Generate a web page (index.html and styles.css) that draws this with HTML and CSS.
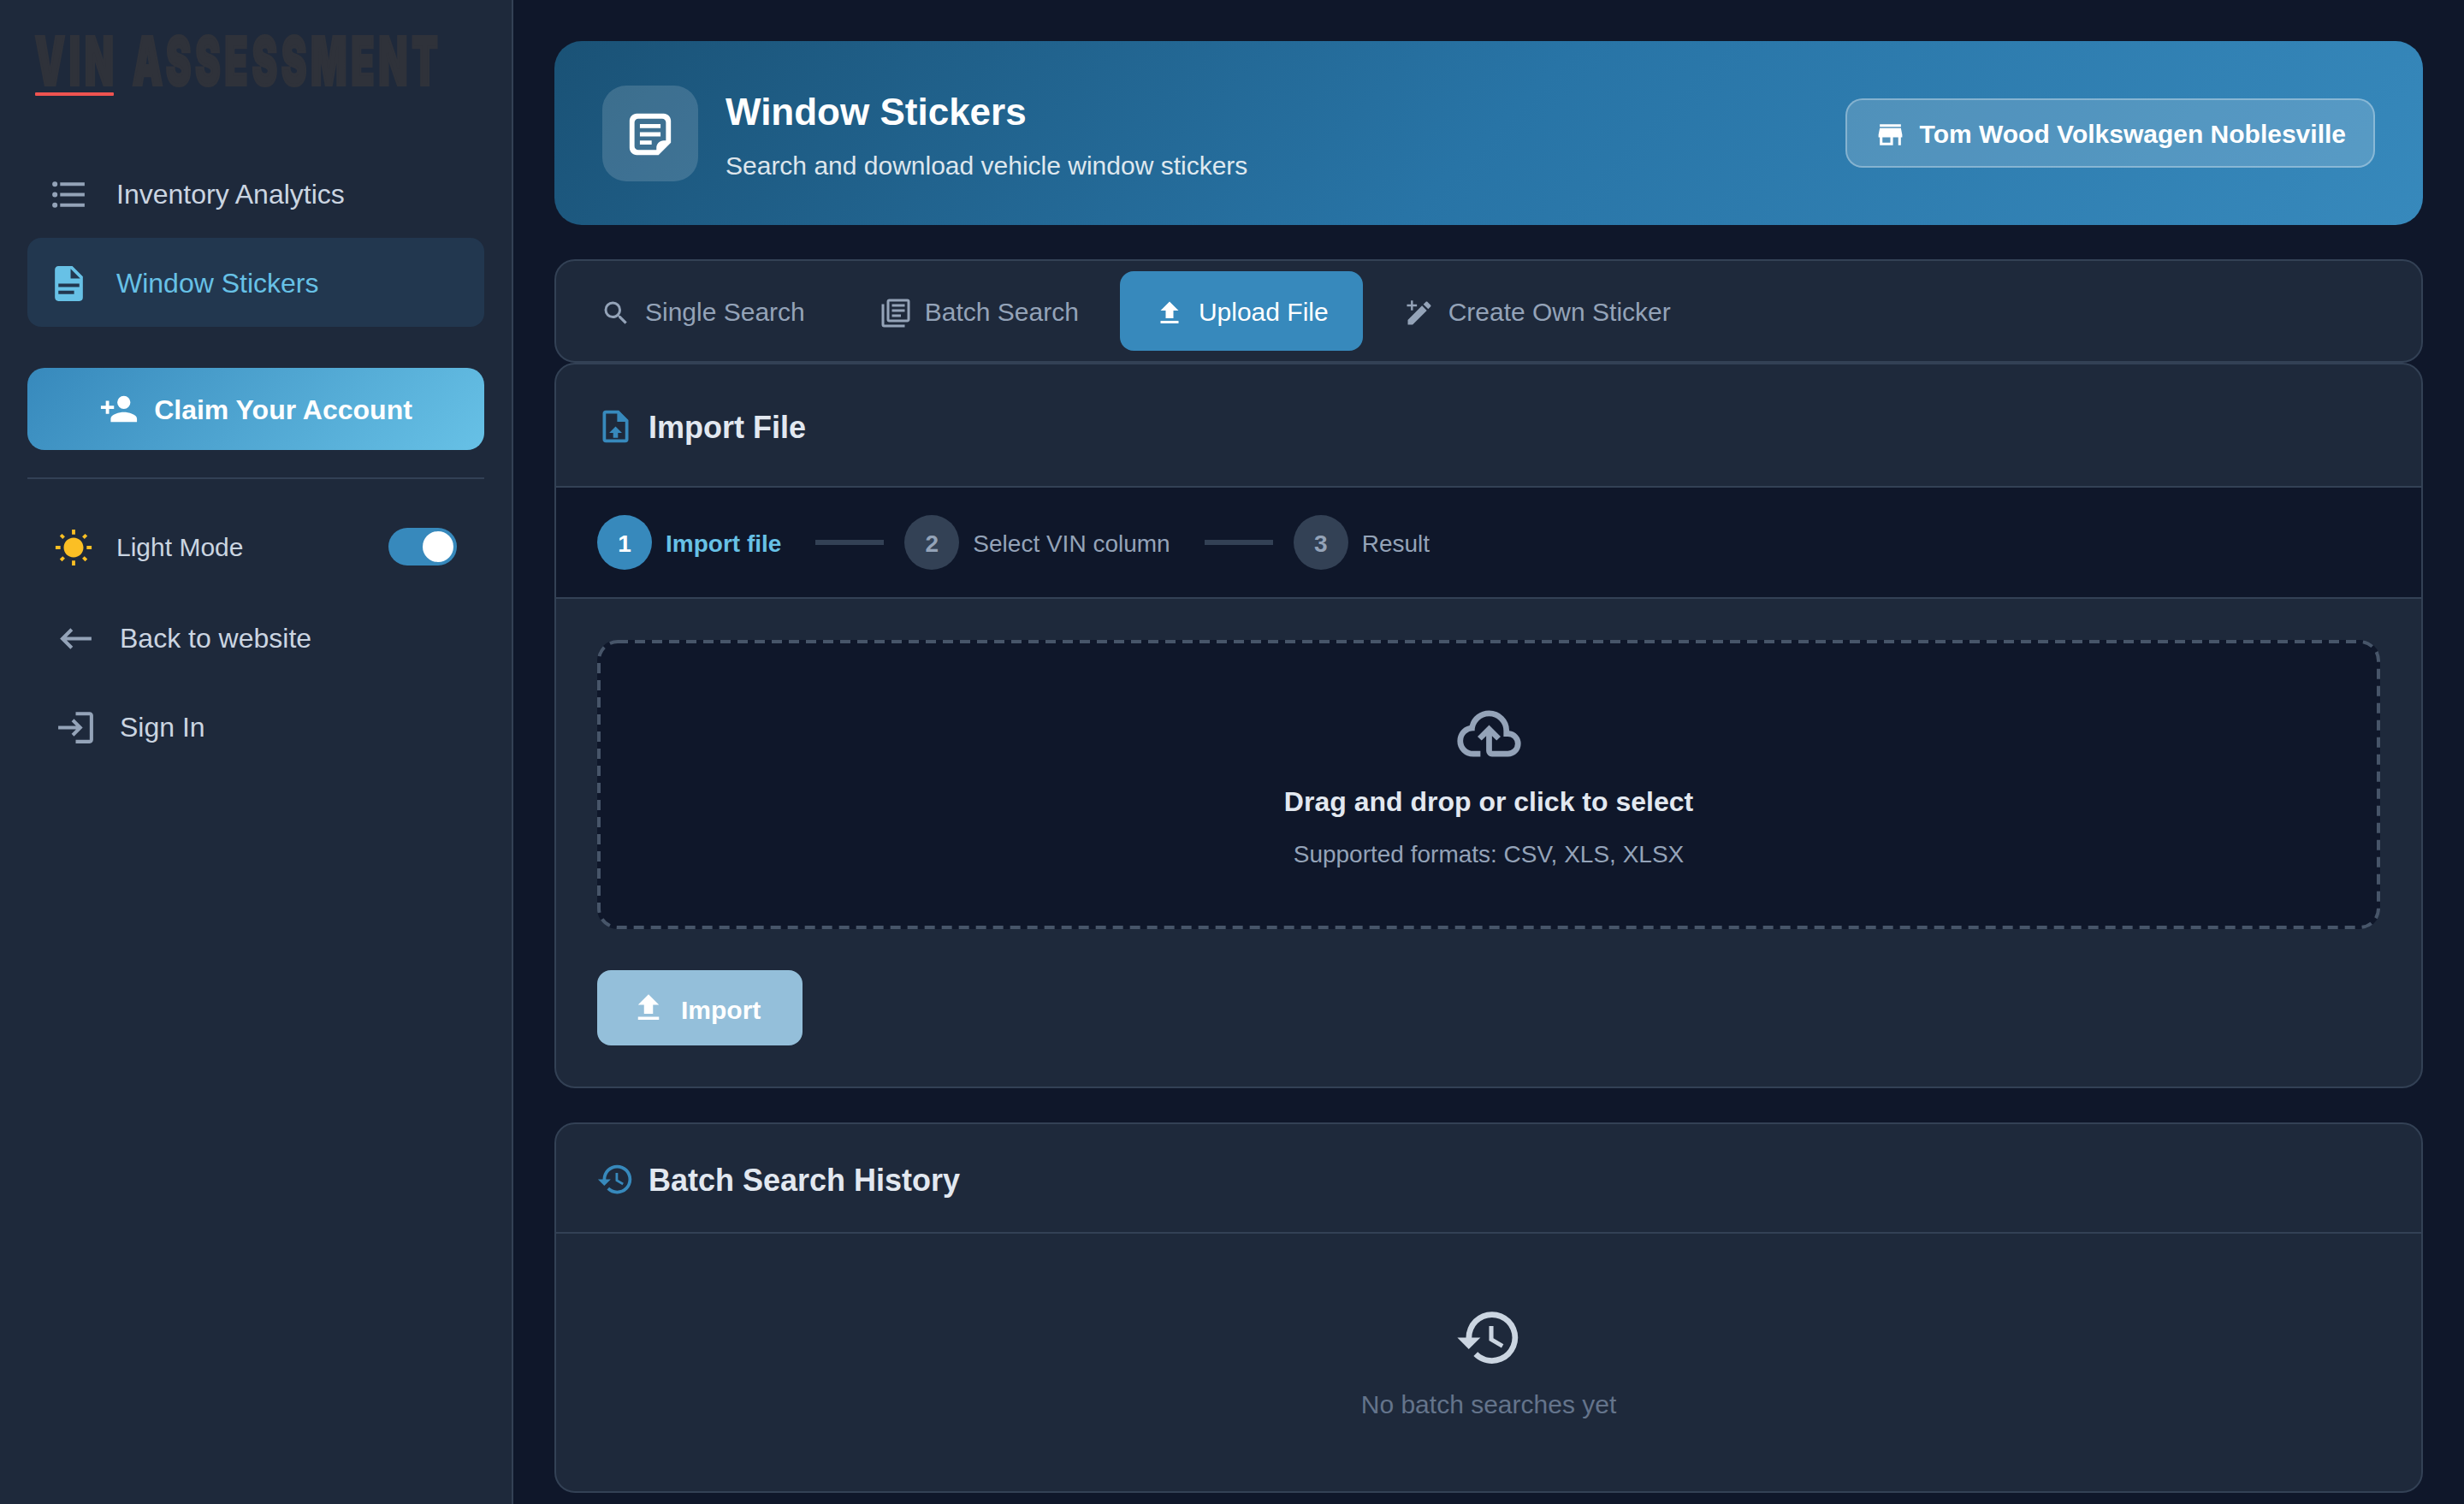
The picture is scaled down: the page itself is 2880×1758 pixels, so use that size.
FILE: index.html
```html
<!DOCTYPE html>
<html lang="en">
<head>
  <meta charset="UTF-8" />
  <meta name="viewport" content="width=device-width, initial-scale=1" />
  <title>VIN Assessment - Window Stickers</title>
  <link rel="stylesheet" href="styles.css">
</head>
<body>
  <!-- Sidebar -->
  <aside class="sidebar">
    <a class="logo" href="#">
      <span class="logo-text">VIN ASSESSMENT</span>
      <span class="logo-line"></span>
    </a>

    <nav class="nav">
      <a class="nav-item" href="#">
        <span class="nav-icon"><svg class="icon" viewBox="0 0 24 24"><path d="M7,5H21V7H7V5M7,13V11H21V13H7M4,4.5A1.5,1.5 0 0,1 5.5,6A1.5,1.5 0 0,1 4,7.5A1.5,1.5 0 0,1 2.5,6A1.5,1.5 0 0,1 4,4.5M4,10.5A1.5,1.5 0 0,1 5.5,12A1.5,1.5 0 0,1 4,13.5A1.5,1.5 0 0,1 2.5,12A1.5,1.5 0 0,1 4,10.5M7,19V17H21V19H7M4,16.5A1.5,1.5 0 0,1 5.5,18A1.5,1.5 0 0,1 4,19.5A1.5,1.5 0 0,1 2.5,18A1.5,1.5 0 0,1 4,16.5Z"/></svg></span>
        <span class="label">Inventory Analytics</span>
      </a>
      <a class="nav-item active" href="#">
        <span class="nav-icon"><svg class="icon" viewBox="0 0 24 24"><path d="M13,9H18.5L13,3.5V9M6,2H14L20,8V20A2,2 0 0,1 18,22H6C4.89,22 4,21.1 4,20V4C4,2.89 4.89,2 6,2M15,18V16H6V18H15M18,14V12H6V14H18Z"/></svg></span>
        <span class="label">Window Stickers</span>
      </a>
    </nav>

    <button class="claim-btn" type="button">
      <svg class="icon" viewBox="0 0 24 24"><path d="M15,14C12.33,14 7,15.33 7,18V20H23V18C23,15.33 17.67,14 15,14M6,10V7H4V10H1V12H4V15H6V12H9V10M15,12A4,4 0 0,0 19,8A4,4 0 0,0 15,4A4,4 0 0,0 11,8A4,4 0 0,0 15,12Z"/></svg>
      <span class="label">Claim Your Account</span>
    </button>

    <div class="sidebar-footer">
      <div class="theme-row">
        <svg class="icon sun" viewBox="0 0 24 24"><path d="M3.55 19.09L4.96 20.5L6.76 18.71L5.34 17.29M12 6C8.69 6 6 8.69 6 12S8.69 18 12 18 18 15.31 18 12C18 8.68 15.31 6 12 6M20 13H23V11H20M17.24 18.71L19.04 20.5L20.45 19.09L18.66 17.29M20.45 5L19.04 3.6L17.24 5.39L18.66 6.81M13 1H11V4H13M6.76 5.39L4.96 3.6L3.55 5L5.34 6.81L6.76 5.39M1 13H4V11H1M13 20H11V23H13"/></svg>
        <span class="label">Light Mode</span>
        <span class="toggle"><span class="knob"></span></span>
      </div>
      <a class="nav-item link" href="#">
        <span class="nav-icon"><svg class="icon" viewBox="0 0 24 24"><path d="M21,11H6.83L10.41,7.41L9,6L3,12L9,18L10.41,16.58L6.83,13H21V11Z"/></svg></span>
        Back to website
      </a>
      <a class="nav-item link" href="#">
        <span class="nav-icon"><svg class="icon" viewBox="0 0 24 24"><path d="M11 7L9.6 8.4L12.2 11H2V13H12.2L9.6 15.6L11 17L16 12L11 7M20 19H12V21H20C21.1 21 22 20.1 22 19V5C22 3.9 21.1 3 20 3H12V5H20V19Z"/></svg></span>
        Sign In
      </a>
    </div>
  </aside>

  <main class="content">
    <!-- Page header -->
    <header class="page-header">
      <div class="header-icon">
        <svg class="icon" viewBox="0 0 24 24"><path fill-rule="evenodd" d="M5.5,2C3.56,2 2,3.56 2,5.5V18.5C2,20.44 3.56,22 5.5,22H16L22,16V5.5C22,3.56 20.44,2 18.5,2H5.5M6.25,4.4H17.75A1.85,1.85 0 0,1 19.6,6.25V15H18.5C16.56,15 15,16.56 15,18.5V19.6H6.25A1.85,1.85 0 0,1 4.4,17.75V6.25A1.85,1.85 0 0,1 6.25,4.4Z"/><path d="M7,7H17V9H7V7M7,11H17V13H7V11M7,15H12.7V17H7V15Z"/></svg>
      </div>
      <div class="header-text">
        <h1>Window Stickers</h1>
        <p>Search and download vehicle window stickers</p>
      </div>
      <div class="dealer">
        <svg class="icon" viewBox="0 0 24 24"><path d="M12,18H6V14H12M21,14V12L20,7H4L3,12V14H4V20H14V14H18V20H20V14M20,4H4V6H20V4Z"/></svg>
        <span class="label">Tom Wood Volkswagen Noblesville</span>
      </div>
    </header>

    <!-- Tabs -->
    <div class="tabs">
      <button class="tab" type="button">
        <svg class="icon" viewBox="0 0 24 24"><path d="M9.5,3A6.5,6.5 0 0,1 16,9.5C16,11.11 15.41,12.59 14.44,13.73L14.71,14H15.5L20.5,19L19,20.5L14,15.5V14.71L13.73,14.44C12.59,15.41 11.11,16 9.5,16A6.5,6.5 0 0,1 3,9.5A6.5,6.5 0 0,1 9.5,3M9.5,5C7,5 5,7 5,9.5C5,12 7,14 9.5,14C12,14 14,12 14,9.5C14,7 12,5 9.5,5Z"/></svg>
        <span class="label">Single Search</span>
      </button>
      <button class="tab" type="button">
        <svg class="icon" viewBox="0 0 24 24"><path d="M16,15H9V13H16V15M19,11H9V9H19V11M19,7H9V5H19V7M3,5V21H19V23H3A2,2 0 0,1 1,21V5H3M21,1A2,2 0 0,1 23,3V17C23,18.11 22.11,19 21,19H7A2,2 0 0,1 5,17V3C5,1.89 5.89,1 7,1H21M7,3V17H21V3H7Z"/></svg>
        <span class="label">Batch Search</span>
      </button>
      <button class="tab active" type="button">
        <svg class="icon" viewBox="0 0 24 24"><path d="M9,16V10H5L12,3L19,10H15V16H9M5,20V18H19V20H5Z"/></svg>
        <span class="label">Upload File</span>
      </button>
      <button class="tab" type="button">
        <svg class="icon" viewBox="0 0 24 24"><path d="M3,17.25V21H6.75L17.81,9.94L14.06,6.19L3,17.25M20.71,7.04C21.1,6.65 21.1,6 20.71,5.63L18.37,3.29C18,2.9 17.35,2.9 16.96,3.29L15.12,5.12L18.87,8.87L20.71,7.04M5.4,2.1H7V5.2H10.1V6.8H7V9.9H5.4V6.8H2.3V5.2H5.4V2.1Z"/></svg>
        <span class="label">Create Own Sticker</span>
      </button>
    </div>

    <!-- Import card -->
    <section class="card">
      <div class="card-header import-header">
        <svg class="icon" viewBox="0 0 24 24"><path d="M14,2H6A2,2 0 0,0 4,4V20A2,2 0 0,0 6,22H18A2,2 0 0,0 20,20V8L14,2M18,20H6V4H13V9H18V20M12,12L16,16H13.5V19H10.5V16H8L12,12Z"/></svg>
        <h2>Import File</h2>
      </div>

      <div class="steps">
        <div class="step active"><span class="num">1</span><span class="label">Import file</span></div>
        <span class="step-line"></span>
        <div class="step"><span class="num">2</span><span class="label">Select VIN column</span></div>
        <span class="step-line"></span>
        <div class="step"><span class="num">3</span><span class="label">Result</span></div>
      </div>

      <div class="card-body">
        <div class="dropzone">
          <svg class="drop-border"><rect x="2" y="2" rx="22" /></svg>
          <svg class="icon" viewBox="0 0 24 24"><path d="M6.5 20Q4.22 20 2.61 18.43 1 16.85 1 14.58 1 12.63 2.17 11.1 3.35 9.57 5.25 9.15 5.88 6.85 7.75 5.43 9.63 4 12 4 14.93 4 16.96 6.04 19 8.07 19 11 20.73 11.2 21.86 12.5 23 13.78 23 15.5 23 17.38 21.69 18.69 20.38 20 18.5 20H13Q12.18 20 11.59 19.41 11 18.83 11 18V12.85L9.4 14.4L8 13L12 9L16 13L14.6 14.4L13 12.85V18H18.5Q19.55 18 20.27 17.27 21 16.55 21 15.5 21 14.45 20.27 13.73 19.55 13 18.5 13H17V11Q17 8.93 15.54 7.46 14.08 6 12 6 9.93 6 8.46 7.46 7 8.93 7 11H6.5Q5.05 11 4.03 12.03 3 13.05 3 14.5 3 15.95 4.03 17 5.05 18 6.5 18H9V20Z"/></svg>
          <p class="drop-title">Drag and drop or click to select</p>
          <p class="drop-hint">Supported formats: CSV, XLS, XLSX</p>
        </div>
        <button class="import-btn" type="button">
          <svg class="icon" viewBox="0 0 24 24"><path d="M9,16V10H5L12,3L19,10H15V16H9M5,20V18H19V20H5Z"/></svg>
          <span class="label">Import</span>
        </button>
      </div>
    </section>

    <!-- History card -->
    <section class="card history">
      <div class="card-header">
        <svg class="icon" viewBox="0 0 24 24"><path d="M13.5,8H12V13L16.28,15.54L17,14.33L13.5,12.25V8M13,3A9,9 0 0,0 4,12H1L4.96,16.03L9,12H6A7,7 0 0,1 13,5A7,7 0 0,1 20,12A7,7 0 0,1 13,19C11.07,19 9.32,18.21 8.06,16.94L6.64,18.36C8.27,20 10.5,21 13,21A9,9 0 0,0 22,12A9,9 0 0,0 13,3"/></svg>
        <h2>Batch Search History</h2>
      </div>
      <div class="empty">
        <svg class="icon" viewBox="0 0 24 24"><path d="M13.5,8H12V13L16.28,15.54L17,14.33L13.5,12.25V8M13,3A9,9 0 0,0 4,12H1L4.96,16.03L9,12H6A7,7 0 0,1 13,5A7,7 0 0,1 20,12A7,7 0 0,1 13,19C11.07,19 9.32,18.21 8.06,16.94L6.64,18.36C8.27,20 10.5,21 13,21A9,9 0 0,0 22,12A9,9 0 0,0 13,3"/></svg>
        <p>No batch searches yet</p>
      </div>
    </section>
  </main>
</body>
</html>
```

FILE: styles.css
```css
* {
  box-sizing: border-box;
  margin: 0;
  padding: 0;
}

body {
  display: flex;
  height: 1758px;
  overflow: hidden;
  background: #0f172a;
  color: #e2e8f0;
  font-family: "Liberation Sans", Arial, sans-serif;
  font-size: 30px;
}

a {
  color: inherit;
  text-decoration: none;
}

button {
  border: none;
  font: inherit;
  cursor: pointer;
}

.icon {
  display: block;
  flex-shrink: 0;
  fill: currentColor;
}

.label {
  padding-top: 2px;
}

/* Sidebar */
.sidebar {
  width: 600px;
  flex-shrink: 0;
  padding: 36px 32px 0;
  background: #1e293b;
  border-right: 2px solid #334155;
}

.logo {
  display: block;
  height: 138px;
  padding-left: 9px;
}

.logo-text {
  display: block;
  width: max-content;
  height: 70px;
  color: #2f323a;
  font-family: Inter, "Liberation Sans", sans-serif;
  font-size: 77px;
  font-weight: 900;
  line-height: 70px;
  letter-spacing: 9px;
  word-spacing: 6px;
  white-space: nowrap;
  transform: scaleX(0.57);
  transform-origin: left;
  -webkit-text-stroke: 4px #2f323a;
}

.logo-line {
  display: block;
  width: 92px;
  height: 4px;
  margin-top: 2px;
  border-radius: 1px;
  background: #ef5350;
}

.nav-item {
  display: flex;
  align-items: center;
  height: 104px;
  padding: 0 24px;
  border-radius: 16px;
  color: #cbd5e1;
  font-size: 32px;
}

.nav-icon {
  display: flex;
  justify-content: center;
  width: 48px;
  margin-right: 32px;
  padding-top: 3px;
  color: #94a3b8;
}

.nav-icon .icon {
  width: 49px;
  height: 49px;
}

.nav-item.active,
.nav-item.active .nav-icon {
  color: #67c1e6;
}

.nav-item.active {
  background: #22374f;
}

.nav-item.link {
  padding-left: 32px;
}

.link .nav-icon {
  margin-right: 28px;
  padding-top: 1px;
}

.claim-btn {
  display: flex;
  align-items: center;
  justify-content: center;
  gap: 18px;
  width: 100%;
  height: 96px;
  margin: 48px 0 32px;
  border-radius: 20px;
  background: linear-gradient(135deg, #3789bc, #67c1e6);
  color: #fff;
  font-size: 32px;
  font-weight: 700;
}

.claim-btn .icon {
  width: 46px;
  height: 46px;
}

.sidebar-footer {
  padding-top: 32px;
  border-top: 2px solid #334155;
}

.theme-row {
  display: flex;
  align-items: center;
  height: 94px;
  margin-bottom: 8px;
  padding: 0 32px 0 31px;
  color: #cbd5e1;
}

.sun {
  width: 46px;
  height: 46px;
  margin-top: 2px;
  margin-right: 27px;
  color: #fbbf24;
}

.toggle {
  display: flex;
  justify-content: flex-end;
  width: 80px;
  height: 44px;
  margin-left: auto;
  padding: 4px;
  border-radius: 22px;
  background: #3789bc;
}

.knob {
  width: 36px;
  height: 36px;
  border-radius: 50%;
  background: #fff;
}

/* Main content */
.content {
  flex: 1;
  padding: 48px;
}

.page-header {
  display: flex;
  align-items: center;
  height: 215px;
  margin-bottom: 40px;
  padding: 0 56px;
  border-radius: 32px;
  background: linear-gradient(135deg, #1a5276 0%, #2874a6 50%, #3789bc 100%);
  color: #fff;
}

.header-icon {
  display: flex;
  align-items: center;
  justify-content: center;
  width: 112px;
  height: 112px;
  margin-right: 32px;
  padding-top: 2px;
  border-radius: 28px;
  background: rgba(255, 255, 255, 0.15);
}

.header-icon .icon {
  width: 58px;
  height: 58px;
}

.header-text {
  padding-top: 8px;
}

.header-text h1 {
  margin-bottom: 12px;
  font-size: 44px;
  line-height: 56px;
}

.header-text p {
  line-height: 46px;
  opacity: 0.85;
}

.dealer {
  display: flex;
  align-items: center;
  gap: 16px;
  height: 81px;
  margin-left: auto;
  padding: 0 32px;
  border: 2px solid rgba(255, 255, 255, 0.3);
  border-radius: 20px;
  background: rgba(255, 255, 255, 0.17);
  font-weight: 700;
}

.dealer .icon {
  width: 37px;
  height: 37px;
  margin-top: 4px;
}

/* Tabs */
.tabs {
  display: flex;
  gap: 8px;
  height: 121px;
  padding: 12px;
  border: 2px solid #334155;
  border-radius: 24px;
  background: #1e293b;
}

.tab {
  display: flex;
  align-items: center;
  gap: 16px;
  padding: 0 40px;
  border-radius: 16px;
  background: none;
  color: #94a3b8;
}

.tab .icon {
  width: 36px;
  height: 36px;
  margin-top: 4px;
}

.tab.active {
  background: #3789bc;
  color: #fff;
}

/* Cards */
.card {
  margin-bottom: 40px;
  overflow: hidden;
  border: 2px solid #334155;
  border-radius: 24px;
  background: #1e293b;
}

.card-header {
  display: flex;
  align-items: center;
  gap: 16px;
  height: 128px;
  padding: 2px 47px 0;
  border-bottom: 2px solid #334155;
}

.import-header {
  height: 144px;
}

.card-header .icon {
  width: 45px;
  height: 45px;
  color: #3789bc;
}

.card-header h2 {
  padding-top: 3px;
  font-size: 36px;
}

/* Steps */
.steps {
  display: flex;
  align-items: center;
  gap: 24px;
  height: 130px;
  padding: 0 48px;
  border-bottom: 2px solid #334155;
  background: #0f172a;
  color: #94a3b8;
  font-size: 28px;
}

.step {
  display: flex;
  align-items: center;
  gap: 16px;
}

.step .label {
  padding-top: 4px;
}

.num {
  display: flex;
  align-items: center;
  justify-content: center;
  width: 64px;
  height: 64px;
  padding-top: 3px;
  border-radius: 50%;
  background: #334155;
  font-weight: 700;
}

.step.active {
  color: #67c1e6;
  font-weight: 700;
}

.step.active .num {
  background: #3789bc;
  color: #fff;
}

.step-line {
  width: 80px;
  height: 6px;
  margin-left: 16px;
  background: #334155;
}

.card-body {
  padding: 48px;
}

.dropzone {
  position: relative;
  display: flex;
  flex-direction: column;
  align-items: center;
  height: 338px;
  margin-bottom: 48px;
  padding-top: 69px;
  border-radius: 24px;
  background: #0f172a;
}

/* Dashed outline, drawn as svg to control the dash length */
.drop-border {
  position: absolute;
  inset: 0;
  width: 100%;
  height: 100%;
}

.drop-border rect {
  width: calc(100% - 4px);
  height: calc(100% - 4px);
  fill: none;
  stroke: #475569;
  stroke-width: 4px;
  stroke-dasharray: 12 8;
}

.dropzone .icon {
  width: 81px;
  height: 81px;
  color: #94a3b8;
}

.drop-title {
  margin: 19px 0 22px;
  font-size: 32px;
  font-weight: 700;
  line-height: 40px;
}

.drop-hint {
  color: #94a3b8;
  font-size: 28px;
  line-height: 40px;
}

.import-btn {
  display: flex;
  align-items: center;
  width: 240px;
  height: 88px;
  padding: 4px 0 0 39px;
  border-radius: 16px;
  background: #94bfda;
  color: #fff;
  font-weight: 700;
}

.import-btn .icon {
  width: 42px;
  height: 42px;
  margin: 0 17px 4px 0;
}

/* Empty state */
.empty {
  display: flex;
  flex-direction: column;
  align-items: center;
  gap: 18px;
  height: 301px;
  padding-top: 81px;
  color: #64748b;
}

.empty .icon {
  width: 81px;
  height: 81px;
  color: #cbd5e1;
}

.empty p {
  line-height: 40px;
}
```
